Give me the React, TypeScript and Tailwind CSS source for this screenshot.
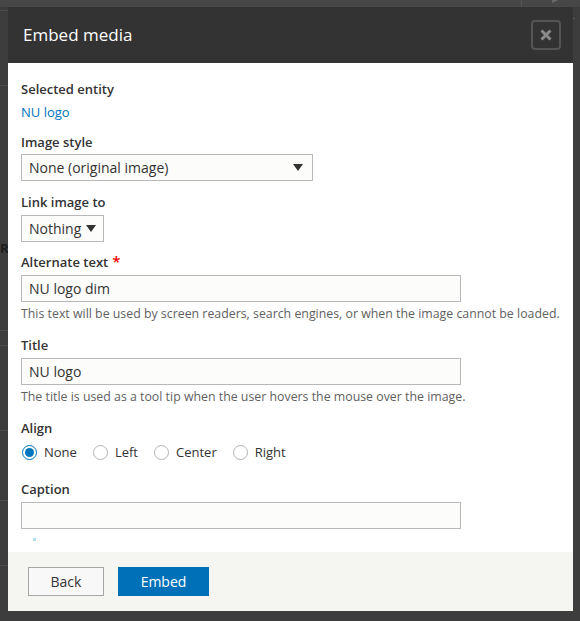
import React from "react";

const font = { fontFamily: '"Open Sans", "Noto Sans", "Liberation Sans", sans-serif' };

function Radio({ checked, label }: { checked?: boolean; label: string }) {
  return (
    <div className="flex items-center">
      <span
        className={
          checked
            ? "w-[15px] h-[15px] rounded-full border border-[#0074bd] bg-white flex items-center justify-center"
            : "w-[15px] h-[15px] rounded-full border border-[#b3b3b3] bg-white"
        }
      >
        {checked && <span className="w-[9px] h-[9px] rounded-full bg-[#0074bd]" />}
      </span>
      <span className="ml-[7px] text-[13px] text-[#333] leading-[18px]">{label}</span>
    </div>
  );
}

function Caret() {
  return (
    <svg width="10" height="7" viewBox="0 0 10 7" className="shrink-0">
      <path d="M0 0 L10 0 L5 7 Z" fill="#333" />
    </svg>
  );
}

export default function App() {
  return (
    <div className="relative w-[580px] h-[621px] bg-[#3d3d3d] overflow-hidden" style={font}>
      {/* dimmed page behind the overlay */}
      <div className="absolute left-0 top-0 w-[580px] h-[7px] bg-[#474747]" />
      <div className="absolute left-[521px] top-0 w-px h-[7px] bg-[#555]" />
      <div className="absolute left-[552px] top-[-9px] text-[12px] text-[#6a6a6a] leading-[16px]">▸ URL</div>
      <div className="absolute left-0 top-[10px] w-[8px] h-px bg-[#4a4a4a]" />
      <div className="absolute left-0 top-[85px] w-[8px] h-px bg-[#4a4a4a]" />
      <div className="absolute left-0 top-[240px] text-[13px] font-bold text-[#1e1e1e] leading-[16px]">RA</div>
      <div className="absolute left-0 top-[330px] w-[8px] h-px bg-[#4a4a4a]" />
      <div className="absolute left-0 top-[345px] w-[8px] h-px bg-[#4a4a4a]" />
      <div className="absolute left-0 top-[430px] w-[8px] h-px bg-[#4a4a4a]" />
      <div className="absolute left-0 top-[500px] w-[8px] h-px bg-[#4a4a4a]" />
      <div className="absolute left-0 top-[565px] w-[8px] h-px bg-[#4a4a4a]" />

      <div className="relative pl-[8px] pt-[7px]">
        <div className="w-[565px] flex flex-col">
          {/* title bar */}
          <div className="h-[56px] bg-[#333333] flex items-center justify-between pl-[15px] pr-[12px]">
            <span className="text-[17px] text-white leading-[22px]">Embed media</span>
            <div className="w-[30px] h-[30px] rounded-[4px] border-2 border-[#555] flex items-center justify-center">
              <svg width="12" height="12" viewBox="0 0 12 12">
                <path d="M1.5 1.5 L10.5 10.5 M10.5 1.5 L1.5 10.5" stroke="#8a8a8a" strokeWidth="3" strokeLinecap="butt" />
              </svg>
            </div>
          </div>

          {/* body */}
          <div className="bg-white px-[13px] pt-[17px] pb-[11px] flex flex-col items-start">
            <div className="text-[13px] font-semibold text-[#333] leading-[18px]">Selected entity</div>
            <div className="mt-[5px] text-[13px] text-[#0074bd] leading-[18px]">NU logo</div>

            <div className="mt-[12px] text-[13px] font-semibold text-[#333] leading-[18px]">Image style</div>
            <div className="mt-[3px] w-[292px] h-[27px] border border-[#b8b8b8] bg-[#fcfcfa] flex items-center justify-between pl-[7px] pr-[9px]">
              <span className="text-[14px] text-[#333] leading-[18px]">None (original image)</span>
              <Caret />
            </div>

            <div className="mt-[12px] text-[13px] font-semibold text-[#333] leading-[18px]">Link image to</div>
            <div className="mt-[4px] w-[83px] h-[27px] border border-[#b8b8b8] bg-[#fcfcfa] flex items-center justify-between pl-[7px] pr-[7px]">
              <span className="text-[14px] text-[#333] leading-[18px]">Nothing</span>
              <Caret />
            </div>

            <div className="mt-[11px] text-[13px] font-semibold text-[#333] leading-[18px] flex">
              Alternate text<span className="ml-[4px] text-[#e00] text-[15px] leading-[16px]">*</span>
            </div>
            <div className="mt-[4px] w-[440px] h-[27px] border border-[#b8b8b8] bg-[#fcfcfa] flex items-center pl-[7px]">
              <span className="text-[14px] text-[#333] leading-[18px]">NU logo dim</span>
            </div>
            <div className="mt-[4px] text-[12.35px] text-[#5f5f5f] leading-[16px] whitespace-nowrap">
              This text will be used by screen readers, search engines, or when the image cannot be loaded.
            </div>

            <div className="mt-[14px] text-[13px] font-semibold text-[#333] leading-[18px]">Title</div>
            <div className="mt-[4px] w-[440px] h-[27px] border border-[#b8b8b8] bg-[#fcfcfa] flex items-center pl-[7px]">
              <span className="text-[14px] text-[#333] leading-[18px]">NU logo</span>
            </div>
            <div className="mt-[4px] text-[12.35px] text-[#5f5f5f] leading-[16px] whitespace-nowrap">
              The title is used as a tool tip when the user hovers the mouse over the image.
            </div>

            <div className="mt-[14px] text-[13px] font-semibold text-[#333] leading-[18px]">Align</div>
            <div className="mt-[6px] flex items-center gap-[16px] pl-[1px]">
              <Radio checked label="None" />
              <Radio label="Left" />
              <Radio label="Center" />
              <Radio label="Right" />
            </div>

            <div className="mt-[19px] text-[13px] font-semibold text-[#333] leading-[18px]">Caption</div>
            <div className="mt-[4px] w-[440px] h-[27px] border border-[#b8b8b8] bg-[#fcfcfa]" />
            <div className="mt-[9px] ml-[12px] w-[3px] h-[3px] bg-[#b3dcf7]" />
          </div>

          {/* footer */}
          <div className="h-[59px] bg-[#f5f5f2] flex items-start gap-[14px] px-[20px] pt-[15px]">
            <div className="w-[76px] h-[29px] border border-[#a6a6a6] bg-[#f8f8f8] flex items-center justify-center text-[14px] text-[#333]">
              Back
            </div>
            <div className="w-[91px] h-[29px] bg-[#0071b8] flex items-center justify-center text-[14px] text-white">
              Embed
            </div>
          </div>
        </div>
      </div>
    </div>
  );
}
